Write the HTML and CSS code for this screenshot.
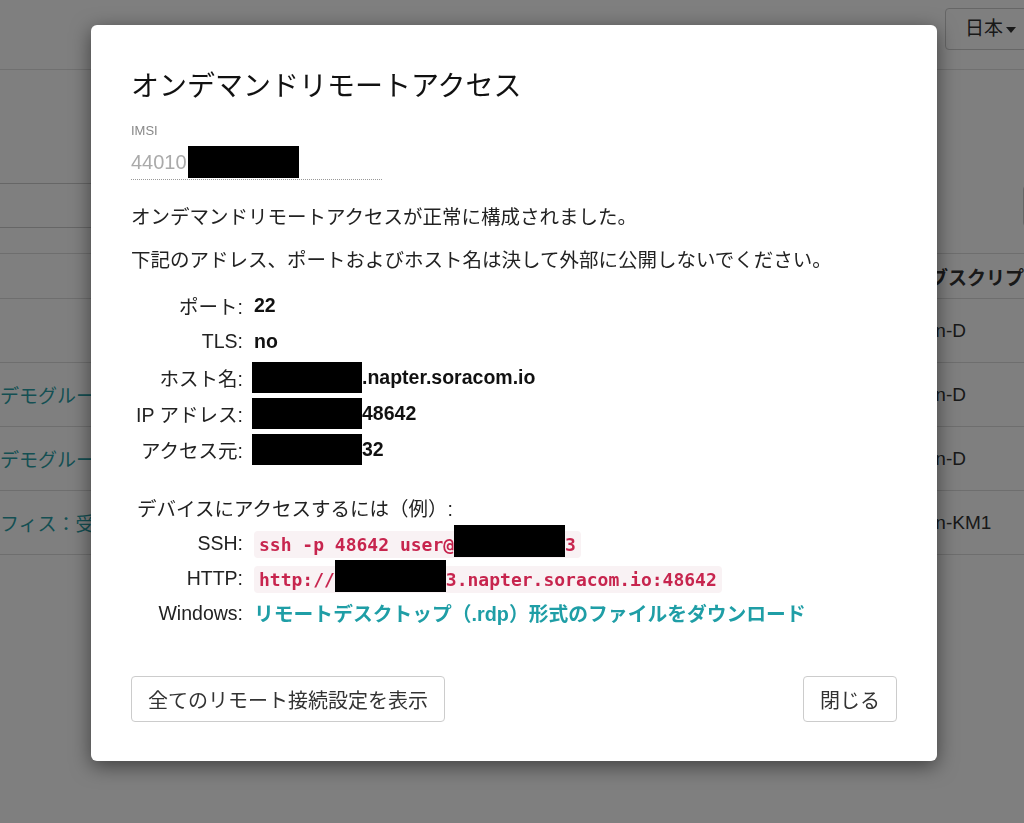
FILE: index.html
```html
<!DOCTYPE html>
<html lang="ja">
<head>
    <meta charset="UTF-8">
    <meta name="viewport" content="width=device-width, initial-scale=1.0">
    <title>SIM 管理 - オンデマンドリモートアクセス</title>
    <link rel="stylesheet" href="styles.css">
</head>
<body>
    <div class="page">
        <header class="topbar">
            <div class="lang-btn">日本 <span class="caret"></span></div>
        </header>

        <div class="toolbar">
            <div class="search-box"></div>
            <div class="search-btn"></div>
        </div>

        <table class="sim-table">
            <thead>
                <tr>
                    <th class="col-group"></th>
                    <th class="col-name"></th>
                    <th class="col-plan">サブスクリプション</th>
                </tr>
            </thead>
            <tbody>
                <tr><td class="group-link"></td><td></td><td>plan-D</td></tr>
                <tr><td class="group-link">新デモグループ</td><td></td><td>plan-D</td></tr>
                <tr><td class="group-link">新デモグループ</td><td></td><td>plan-D</td></tr>
                <tr><td class="group-link">オフィス：受付</td><td></td><td>plan-KM1</td></tr>
            </tbody>
        </table>
    </div>

    <div class="backdrop"></div>

    <div class="modal">
        <h4 class="modal-title">オンデマンドリモートアクセス</h4>

        <div class="imsi-label">IMSI</div>
        <div class="imsi-value">44010<span class="redact redact-imsi"></span></div>

        <p class="message first">オンデマンドリモートアクセスが正常に構成されました。</p>
        <p class="message">下記のアドレス、ポートおよびホスト名は決して外部に公開しないでください。</p>

        <dl class="detail-list">
            <dt>ポート:</dt>
            <dd>22</dd>
            <dt>TLS:</dt>
            <dd>no</dd>
            <dt>ホスト名:</dt>
            <dd><span class="redact redact-row"></span>.napter.soracom.io</dd>
            <dt>IP アドレス:</dt>
            <dd><span class="redact redact-row"></span>48642</dd>
            <dt>アクセス元:</dt>
            <dd><span class="redact redact-row"></span>32</dd>
        </dl>

        <div class="example-title">デバイスにアクセスするには（例）:</div>
        <dl class="example-list">
            <dt>SSH:</dt>
            <dd><code>ssh -p 48642 user@<span class="redact redact-code"></span>3</code></dd>
            <dt>HTTP:</dt>
            <dd><code>http://<span class="redact redact-code"></span>3.napter.soracom.io:48642</code></dd>
            <dt>Windows:</dt>
            <dd><a href="#" class="rdp-link">リモートデスクトップ（.rdp）形式のファイルをダウンロード</a></dd>
        </dl>

        <div class="modal-footer">
            <button class="btn">全てのリモート接続設定を表示</button>
            <button class="btn">閉じる</button>
        </div>
    </div>
</body>
</html>
```

FILE: styles.css
```css
* {
    margin: 0;
    padding: 0;
    box-sizing: border-box;
    font-family: "Liberation Sans", "Noto Sans CJK JP", sans-serif;
}

body {
    background-color: #fff;
    color: #333;
    overflow: hidden;
    height: 823px;
}

/* background page */

.page {
    width: 1024px;
    overflow: hidden;
}

.topbar {
    height: 70px;
    border-bottom: 1px solid #e0e0e0;
    display: flex;
    justify-content: flex-end;
    padding-top: 8px;
}

.lang-btn {
    width: 95px;
    height: 42px;
    margin-right: -16px;
    border: 1px solid #ccc;
    border-radius: 4px;
    font-size: 19px;
    line-height: 40px;
    padding-left: 19px;
    color: #333;
}

.caret {
    display: inline-block;
    width: 0;
    height: 0;
    border-left: 5px solid transparent;
    border-right: 5px solid transparent;
    border-top: 6px solid #333;
    vertical-align: middle;
    margin-left: -2px;
}

.toolbar {
    display: flex;
    justify-content: space-between;
    margin-top: 113px;
    height: 45px;
}

.search-box {
    width: 700px;
    margin-left: -10px;
    border: 1px solid #ccc;
    border-radius: 4px;
}

.search-btn {
    width: 80px;
    margin-right: -79px;
    margin-top: 2px;
    height: 42px;
    border: 1px solid #ccc;
    border-radius: 4px;
}

.sim-table {
    margin-top: 25px;
    margin-left: -19px;
    width: 1200px;
    border-collapse: collapse;
    table-layout: fixed;
    font-size: 19px;
}

.sim-table th {
    height: 45px;
    text-align: left;
    font-weight: bold;
    border-top: 1px solid #ddd;
    border-bottom: 1px solid #ddd;
}

.sim-table td {
    height: 64px;
    border-bottom: 1px solid #ddd;
}

.col-group {
    width: 400px;
}

.col-name {
    width: 529px;
}

.group-link {
    color: #2a9fa7;
}

/* modal */

.backdrop {
    position: fixed;
    top: 0;
    left: 0;
    right: 0;
    bottom: 0;
    background: rgba(0, 0, 0, 0.5);
}

.modal {
    position: absolute;
    top: 25px;
    left: 91px;
    width: 846px;
    padding: 40px 40px 39px;
    background: #fff;
    border-radius: 6px;
    box-shadow: 0 5px 20px rgba(0, 0, 0, 0.5);
    font-size: 19.5px;
    color: #222;
}

.modal-title {
    font-size: 28px;
    line-height: 44px;
    font-weight: normal;
    color: #111;
}

.imsi-label {
    margin-top: 13px;
    font-size: 13px;
    line-height: 18px;
    color: #888;
}

.imsi-value {
    margin-top: 6px;
    width: 251px;
    height: 34px;
    font-size: 20px;
    line-height: 28px;
    color: #aaa;
    border-bottom: 1px dotted #999;
    display: flex;
    align-items: center;
    padding-bottom: 1px;
}

.redact {
    display: inline-block;
    background: #000;
}

.redact-imsi {
    width: 111px;
    height: 32px;
    margin-left: 1px;
}

.redact-row {
    width: 110px;
    height: 31px;
    margin-left: -2px;
}

.redact-code {
    width: 111px;
    height: 32px;
    margin-top: -12px;
    vertical-align: -6px;
}

.message {
    margin-top: 13px;
    line-height: 30px;
}

.message.first {
    margin-top: 22px;
}

.detail-list,
.example-list {
    display: grid;
    grid-template-columns: 112px 1fr;
    column-gap: 11px;
    align-items: center;
}

.detail-list {
    margin-top: 12px;
    grid-auto-rows: 36px;
}

.detail-list dt,
.example-list dt {
    text-align: right;
}

.detail-list dd {
    display: flex;
    align-items: center;
    font-weight: bold;
    color: #111;
}

.example-title {
    margin-top: 27px;
    padding-left: 6px;
    line-height: 30px;
}

.example-list {
    margin-top: 2px;
    grid-auto-rows: 35px;
}

.example-list dd {
    line-height: 26px;
}

code {
    font-family: "DejaVu Sans Mono", monospace;
    font-size: 18px;
    font-weight: bold;
    line-height: 20px;
    color: #c7254e;
    background: #f9f2f4;
    padding: 3px 5px;
    border-radius: 4px;
}

.rdp-link {
    color: #1f9ea6;
    font-size: 19.8px;
    font-weight: bold;
    text-decoration: none;
}

.modal-footer {
    margin-top: 45px;
    display: flex;
    justify-content: space-between;
}

.btn {
    height: 46px;
    padding: 0 16px;
    background: #fff;
    border: 1px solid #ccc;
    border-radius: 4px;
    font-size: 20px;
    color: #333;
}
```
